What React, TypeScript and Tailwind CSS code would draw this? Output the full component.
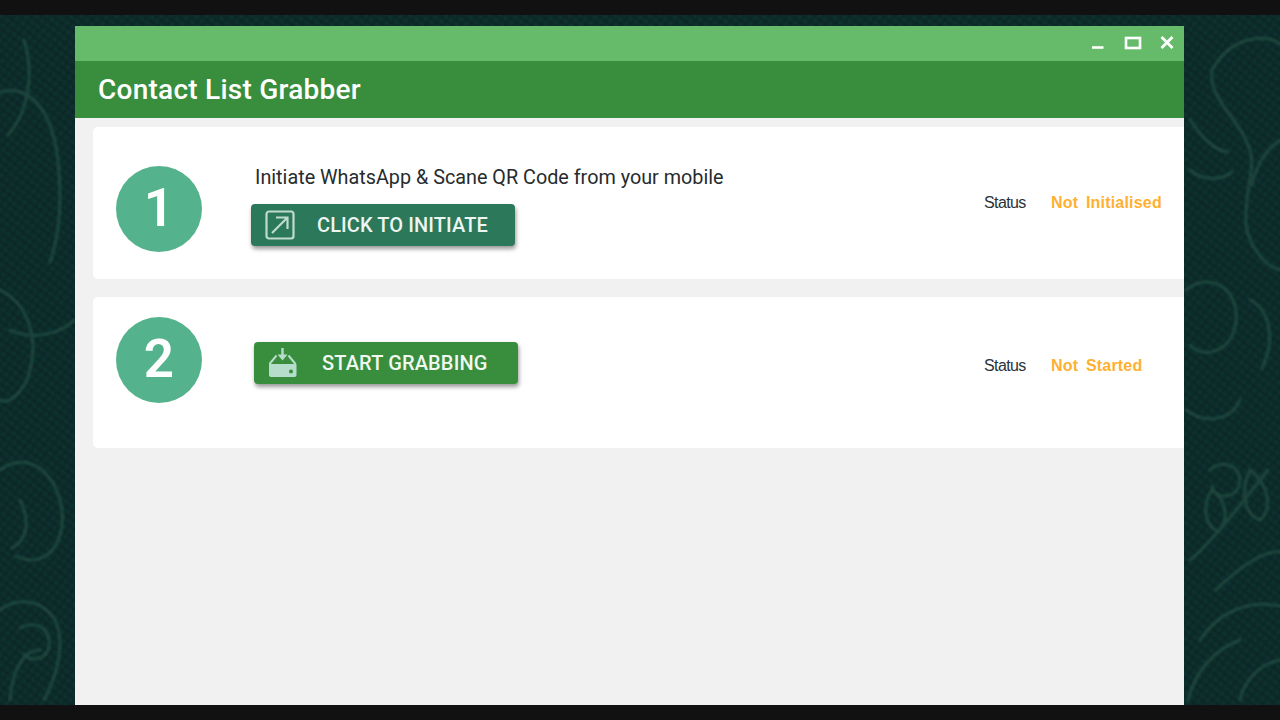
import React from 'react';

const roboto = { fontFamily: 'Roboto, sans-serif' };

// Dark damask wallpaper behind the window
const Wallpaper = () => (
  <svg className="absolute inset-0 w-full h-full" viewBox="0 15 1280 690" preserveAspectRatio="none">
    <defs>
      <pattern id="weave" width="7" height="7" patternUnits="userSpaceOnUse" patternTransform="rotate(38)">
        <rect width="7" height="7" fill="#11302f" />
        <path d="M0 0H7" stroke="#0a2222" strokeWidth="3" />
        <path d="M0 0V7" stroke="#0a2222" strokeWidth="2" />
      </pattern>
      <filter id="soft" x="0" y="0" width="100%" height="100%">
        <feGaussianBlur stdDeviation="0.8" />
      </filter>
    </defs>
    <g filter="url(#soft)">
      <rect x="-10" y="5" width="1300" height="710" fill="url(#weave)" />
      <g fill="none" stroke="#245347" strokeWidth="3" strokeLinecap="round" opacity="0.65">
        <path d="M0 92C30 84 52 110 58 160C62 200 60 235 50 262" />
        <path d="M24 40C34 70 30 110 8 135" />
        <path d="M0 290C22 300 40 330 30 370C24 395 6 405 0 400" />
        <path d="M10 330C30 340 60 335 74 320" />
        <path d="M0 470C26 450 56 470 62 510C66 545 44 570 16 556" />
        <path d="M20 500C30 520 28 540 12 548" />
        <path d="M0 610C18 596 44 600 56 622C64 640 60 670 44 700" />
        <path d="M10 700C12 670 24 650 40 650" />
        <path d="M20 628C38 618 54 632 48 650C44 660 30 662 24 654" />
        <path d="M1212 70C1232 34 1268 34 1280 44" />
        <path d="M1212 70C1208 100 1240 118 1250 150C1256 170 1244 190 1246 225" />
        <path d="M1190 120C1204 140 1214 150 1228 152" />
        <path d="M1190 170C1204 182 1222 180 1232 172" />
        <path d="M1280 140C1266 150 1256 165 1252 185" />
        <path d="M1246 225C1250 252 1270 268 1280 270" />
        <path d="M1186 290C1210 270 1240 290 1236 322C1232 352 1204 360 1190 345" />
        <path d="M1250 300C1270 310 1276 340 1262 368" />
        <path d="M1186 410C1205 425 1232 420 1240 400" />
        <path d="M1210 470C1226 456 1246 470 1238 488C1232 500 1214 498 1212 486" />
        <path d="M1190 560C1214 540 1236 510 1268 470" />
        <path d="M1216 590C1246 560 1270 550 1280 552" />
        <path d="M1250 470C1240 490 1244 515 1260 520C1272 510 1270 485 1250 470Z" />
        <path d="M1212 490C1202 505 1204 525 1218 532C1230 520 1226 500 1212 490Z" />
        <path d="M1200 640C1220 610 1250 600 1280 606" />
        <path d="M1188 700C1196 670 1214 650 1240 640" />
        <path d="M1240 700C1244 680 1260 664 1280 660" />
      </g>
    </g>
  </svg>
);

const StepCircle = ({ n, className }: { n: string; className: string }) => (
  <div className={`w-[86px] h-[86px] rounded-full bg-[#54b28c] flex items-center justify-center text-white text-[53px] font-semibold shrink-0 ${className}`} style={roboto}>
    {n}
  </div>
);

const Status = ({ label, className }: { label: string; className: string }) => (
  <div className={`w-[200px] shrink-0 flex text-[16px] leading-5 ${className}`} style={{ fontFamily: '"Liberation Sans", sans-serif' }}>
    <span className="w-[67px] text-[#2b3138] tracking-[-0.6px]">Status</span>
    <span className="font-bold text-[#ffb030] tracking-[0.2px] [word-spacing:3px]">{label}</span>
  </div>
);

const ExternalIcon = () => (
  <svg width="30" height="30" viewBox="0 0 30 30" fill="none" stroke="#bfdccf" strokeWidth="2.2">
    <rect x="1.5" y="1.5" width="27" height="27" rx="2.5" />
    <path d="M7 23L22 8M11 7.5H22.5V19" />
  </svg>
);

const InboxIcon = () => (
  <svg width="30" height="30" viewBox="0 0 30 30">
    <path d="M14.5 0V9" stroke="#b6dccb" strokeWidth="2.4" />
    <path d="M9.5 6.5H19.5L14.5 12.5Z" fill="#b6dccb" />
    <path d="M8.5 7.5L1.5 16M20.5 7.5L27.5 16" stroke="#b6dccb" strokeWidth="2" fill="none" />
    <path d="M1 16H28.5V27A2 2 0 0 1 26.5 29H3A2 2 0 0 1 1 27Z" fill="#b6dccb" />
    <circle cx="23" cy="23.5" r="2" fill="#388e3c" />
  </svg>
);

export default function App() {
  return (
    <div className="h-[720px] w-[1280px] overflow-hidden flex flex-col bg-[#111111]" style={roboto}>
      <div className="h-[15px] shrink-0" />
      <div className="relative h-[690px] shrink-0 pl-[75px] pt-[11px]">
        <Wallpaper />
        <div className="relative w-[1109px] h-[679px] bg-[#f1f1f1] flex flex-col">
          {/* Title bar */}
          <div className="h-[35px] shrink-0 bg-[#66bb6a] flex items-start justify-end">
            <svg width="100" height="35" viewBox="0 0 100 35" fill="none" stroke="white">
              <path d="M8 21.5H19.5" strokeWidth="2.6" />
              <rect x="42" y="12" width="14" height="10" strokeWidth="2.6" />
              <path d="M77.5 11L88.5 22M88.5 11L77.5 22" strokeWidth="2.8" />
            </svg>
          </div>

          {/* Header */}
          <div className="h-[57px] shrink-0 bg-[#388e3c] flex items-center pl-[23px]">
            <h1 className="text-white text-[28px] font-medium leading-none tracking-[0.25px]">Contact List Grabber</h1>
          </div>

          <div className="flex flex-col gap-[18px] pl-[18px] pt-[9px]">
            {/* Step 1 */}
            <div className="h-[152px] bg-white rounded-l-[5px] flex items-start pl-[23px]">
              <StepCircle n="1" className="mt-[39px]" />
              <div className="ml-[49px] w-[733px] shrink-0 flex flex-col items-start mt-[37px]">
                <p className="ml-[4px] text-[19.8px] leading-7 text-[#262b2e]">Initiate WhatsApp &amp; Scane QR Code from your mobile</p>
                <button className="mt-[12px] w-[264px] h-[42px] rounded-[4px] bg-[#2c785a] shadow-[1px_3px_4px_rgba(0,0,0,0.4)] flex items-center pl-[14px] text-[#eef5f1] text-[20px] font-medium tracking-[0.1px]">
                  <ExternalIcon />
                  <span className="ml-[22px]">CLICK TO INITIATE</span>
                </button>
              </div>
              <Status label="Not Initialised" className="mt-[66px]" />
            </div>

            {/* Step 2 */}
            <div className="h-[151px] bg-white rounded-l-[5px] flex items-start pl-[23px]">
              <StepCircle n="2" className="mt-[20px]" />
              <div className="ml-[52px] w-[730px] shrink-0 mt-[45px]">
                <button className="w-[264px] h-[42px] rounded-[4px] bg-[#388e3c] shadow-[1px_3px_4px_rgba(0,0,0,0.4)] flex items-center pl-[14px] text-[#f1f7f1] text-[20px] font-medium tracking-[0.15px]">
                  <InboxIcon />
                  <span className="ml-[24px]">START GRABBING</span>
                </button>
              </div>
              <Status label="Not Started" className="mt-[59px]" />
            </div>
          </div>
        </div>
      </div>
      <div className="h-[15px] shrink-0" />
    </div>
  );
}
